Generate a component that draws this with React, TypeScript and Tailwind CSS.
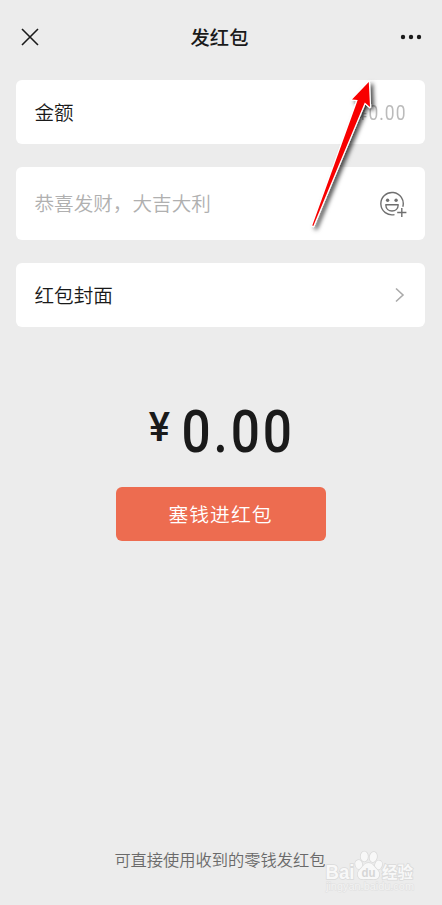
import React from "react";

function CloseIcon() {
  return (
    <svg width="18" height="18" viewBox="0 0 18 18" fill="none" stroke="#1a1a1a" strokeWidth="1.6">
      <path d="M1 1L17 17M17 1L1 17" />
    </svg>
  );
}

function MoreIcon() {
  return (
    <svg width="22" height="6" viewBox="0 0 22 6" fill="#1a1a1a">
      <circle cx="3" cy="3" r="2.2" />
      <circle cx="11" cy="3" r="2.2" />
      <circle cx="19" cy="3" r="2.2" />
    </svg>
  );
}

function SmileyPlusIcon() {
  return (
    <svg width="28" height="28" viewBox="0 0 28 28" fill="none" stroke="#6f6f6f" strokeWidth="1.4">
      <path d="M14.5 24.6A11.2 11.2 0 1 1 22.8 16.8" />
      <circle cx="7.6" cy="10.3" r="1.7" fill="#6f6f6f" stroke="none" />
      <circle cx="16.1" cy="10.3" r="1.7" fill="#6f6f6f" stroke="none" />
      <path d="M5.8 14.7H18.2C18.2 23 5.8 23 5.8 14.7Z" strokeLinejoin="round" />
      <path d="M17.2 22.5H26.4M21.8 17.9V27.1" />
    </svg>
  );
}

function Arrow() {
  return (
    <svg
      className="absolute left-[300px] top-[70px] pointer-events-none"
      width="90"
      height="170"
      viewBox="300 70 90 170"
    >
      <defs>
        <filter id="shadow" x="-30%" y="-10%" width="170%" height="130%">
          <feDropShadow dx="3" dy="2.5" stdDeviation="2.2" floodColor="#000" floodOpacity="0.7" />
        </filter>
      </defs>
      <path
        d="M368.8 82L352 99.5L357.7 100L312.3 225.6L313.3 226L364.8 102.5L370 107Z"
        fill="#f80000"
        stroke="#fff"
        strokeWidth="2.4"
        strokeLinejoin="round"
        paintOrder="stroke"
        filter="url(#shadow)"
      />
    </svg>
  );
}

function Watermark() {
  return (
    <svg
      className="absolute left-[320px] top-[845px] pointer-events-none"
      width="100"
      height="52"
      viewBox="320 845 100 52"
      fill="#f8f8f8"
      stroke="#dadada"
      strokeWidth="1.6"
      paintOrder="stroke"
      fontFamily="'Liberation Sans', 'Noto Sans CJK SC', sans-serif"
    >
      <text x="325.5" y="878.5" fontSize="19.5" fontWeight="700" textLength="29" lengthAdjust="spacingAndGlyphs">Bai</text>
      <ellipse cx="358.8" cy="864.5" rx="3.4" ry="4.4" transform="rotate(-15 358.8 864.5)" />
      <ellipse cx="364.3" cy="856.5" rx="3.6" ry="5" />
      <ellipse cx="373.3" cy="857" rx="3.6" ry="5" transform="rotate(12 373.3 857)" />
      <ellipse cx="378.5" cy="865" rx="3.4" ry="4.4" transform="rotate(20 378.5 865)" />
      <path d="M368.5 863C364.5 863 363.5 866 361 868.5C358.5 871 357 873 358 876C359.5 880.5 364.5 879 368.5 879C372.5 879 377.5 880.5 379 876C380 873 378.5 871 376 868.5C373.5 866 372.5 863 368.5 863Z" />
      <text x="361.5" y="877" fontSize="12.5" fontWeight="700" fill="#d6d6d6" stroke="none" textLength="14" lengthAdjust="spacingAndGlyphs">du</text>
      <text x="382" y="878" fontSize="15.5" fontWeight="700">经验</text>
      <text x="326" y="890" fontSize="10" strokeWidth="1" stroke="#e0e0e0" fill="#f3f3f3" textLength="88" lengthAdjust="spacingAndGlyphs">jingyan.baidu.com</text>
    </svg>
  );
}

export default function App() {
  return (
    <div className="relative w-[442px] h-[905px] overflow-hidden bg-[#ececec] text-[#1a1a1a] flex flex-col font-['Roboto','Noto_Sans_CJK_SC',sans-serif]">
      <header className="h-[80px] shrink-0 flex items-center justify-between pl-[21px] pr-5 pb-1.5">
        <button className="w-[18px]">
          <CloseIcon />
        </button>
        <h1 className="text-[19.3px] leading-7 pt-[3px] font-medium">发红包</h1>
        <button>
          <MoreIcon />
        </button>
      </header>

      <main className="px-4 pr-[17px] flex flex-col gap-[23px] text-[19.6px] font-[350]">
        <div className="h-16 bg-white rounded-md flex items-center justify-between pl-[18.5px] pr-[19px]">
          <span className="pt-[3px]">金额</span>
          <span className="pt-px text-[#bbb] text-[20px] tracking-[1.2px] scale-x-[0.87] origin-right -mr-px font-normal">¥0.00</span>
        </div>
        <div className="h-[73px] bg-white rounded-md flex items-center justify-between pl-[18.5px] pr-[17px]">
          <span className="pt-0.5 text-[#b0b0b0]">恭喜发财，大吉大利</span>
          <SmileyPlusIcon />
        </div>
        <div className="h-16 bg-white rounded-md flex items-center justify-between pl-[18.5px] pr-5">
          <span className="pt-[3px]">红包封面</span>
          <svg width="10" height="16" viewBox="0 0 10 16" fill="none" stroke="#aaa" strokeWidth="1.6">
            <path d="M1 1.5L8 8L1 14.5" />
          </svg>
        </div>
      </main>

      <section className="mt-[70px] pr-px flex flex-col items-center">
        <div className="h-[70px] flex items-start font-medium">
          <span className="text-[40px] leading-[62px] ml-0.5">¥</span>
          <span className="text-[59px] leading-[70px] tracking-[3.3px] scale-x-[0.87] ml-[3px] -mr-[9px]">0.00</span>
        </div>
        <button className="mt-5 w-[210px] h-[54px] rounded-md bg-[#ed6c50] text-white text-[19.8px] tracking-[1px] font-[350] pt-[3px]">
          塞钱进红包
        </button>
      </section>

      <footer className="mt-auto mb-8 pr-0.5 text-center text-[16.25px] leading-6 text-[#6a6a6a] font-[350]">
        可直接使用收到的零钱发红包
      </footer>

      <Arrow />
      <Watermark />
    </div>
  );
}
